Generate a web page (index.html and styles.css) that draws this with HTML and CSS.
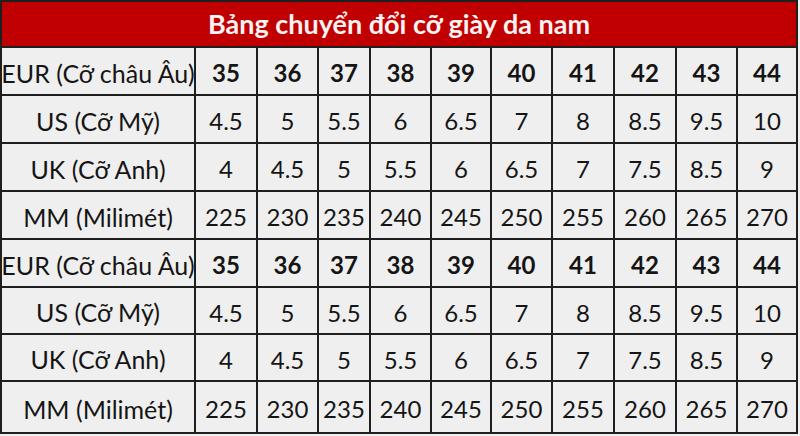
FILE: index.html
```html
<!DOCTYPE html>
<html lang="vi">
<head>
<meta charset="utf-8">
<title>Bảng chuyển đổi cỡ giày da nam</title>
<link rel="stylesheet" href="styles.css">
</head>
<body>
<div class="sheet">
  <div class="title">Bảng chuyển đổi cỡ giày da nam</div>

  <div class="label">EUR (Cỡ châu Âu)</div>
  <div class="cell b">35</div><div class="cell b">36</div><div class="cell b">37</div><div class="cell b">38</div><div class="cell b">39</div><div class="cell b">40</div><div class="cell b">41</div><div class="cell b">42</div><div class="cell b">43</div><div class="cell b">44</div>

  <div class="label">US (Cỡ Mỹ)</div>
  <div class="cell">4.5</div><div class="cell">5</div><div class="cell">5.5</div><div class="cell">6</div><div class="cell">6.5</div><div class="cell">7</div><div class="cell">8</div><div class="cell">8.5</div><div class="cell">9.5</div><div class="cell">10</div>

  <div class="label">UK (Cỡ Anh)</div>
  <div class="cell">4</div><div class="cell">4.5</div><div class="cell">5</div><div class="cell">5.5</div><div class="cell">6</div><div class="cell">6.5</div><div class="cell">7</div><div class="cell">7.5</div><div class="cell">8.5</div><div class="cell">9</div>

  <div class="label">MM (Milimét)</div>
  <div class="cell">225</div><div class="cell">230</div><div class="cell">235</div><div class="cell">240</div><div class="cell">245</div><div class="cell">250</div><div class="cell">255</div><div class="cell">260</div><div class="cell">265</div><div class="cell">270</div>

  <div class="label">EUR (Cỡ châu Âu)</div>
  <div class="cell b">35</div><div class="cell b">36</div><div class="cell b">37</div><div class="cell b">38</div><div class="cell b">39</div><div class="cell b">40</div><div class="cell b">41</div><div class="cell b">42</div><div class="cell b">43</div><div class="cell b">44</div>

  <div class="label">US (Cỡ Mỹ)</div>
  <div class="cell">4.5</div><div class="cell">5</div><div class="cell">5.5</div><div class="cell">6</div><div class="cell">6.5</div><div class="cell">7</div><div class="cell">8</div><div class="cell">8.5</div><div class="cell">9.5</div><div class="cell">10</div>

  <div class="label">UK (Cỡ Anh)</div>
  <div class="cell">4</div><div class="cell">4.5</div><div class="cell">5</div><div class="cell">5.5</div><div class="cell">6</div><div class="cell">6.5</div><div class="cell">7</div><div class="cell">7.5</div><div class="cell">8.5</div><div class="cell">9</div>

  <div class="label">MM (Milimét)</div>
  <div class="cell">225</div><div class="cell">230</div><div class="cell">235</div><div class="cell">240</div><div class="cell">245</div><div class="cell">250</div><div class="cell">255</div><div class="cell">260</div><div class="cell">265</div><div class="cell">270</div>
</div>
</body>
</html>
```

FILE: styles.css
```css
html, body {
  margin: 0;
  padding: 0;
  background: #f0f0f0;
}

body {
  width: 800px;
  height: 436px;
  overflow: hidden;
  font-family: Lato, "Liberation Sans", sans-serif;
  color: #151515;
}

.sheet {
  display: grid;
  width: 794px;
  padding: 2px;
  gap: 2px;
  background: #1f1f1f;
  grid-template-columns: 192px 60px 59px 50px 59px 58px 59px 60px 60px 59px 58px;
  grid-template-rows: 44px 46px 46px 46px 46px 46px 45px 45px 50px;
}

.title {
  grid-column: 1 / -1;
  background: #c00000;
  color: #fbf3f3;
  font-weight: 700;
  font-size: 27px;
  display: flex;
  align-items: center;
  justify-content: center;
  padding-bottom: 2px;
}

.label,
.cell {
  background: #efefef;
  display: flex;
  align-items: center;
  justify-content: center;
  font-size: 24px;
  padding-top: 3px;
  white-space: nowrap;
}

.label {
  font-size: 25px;
}

.b {
  font-weight: 700;
}
```
